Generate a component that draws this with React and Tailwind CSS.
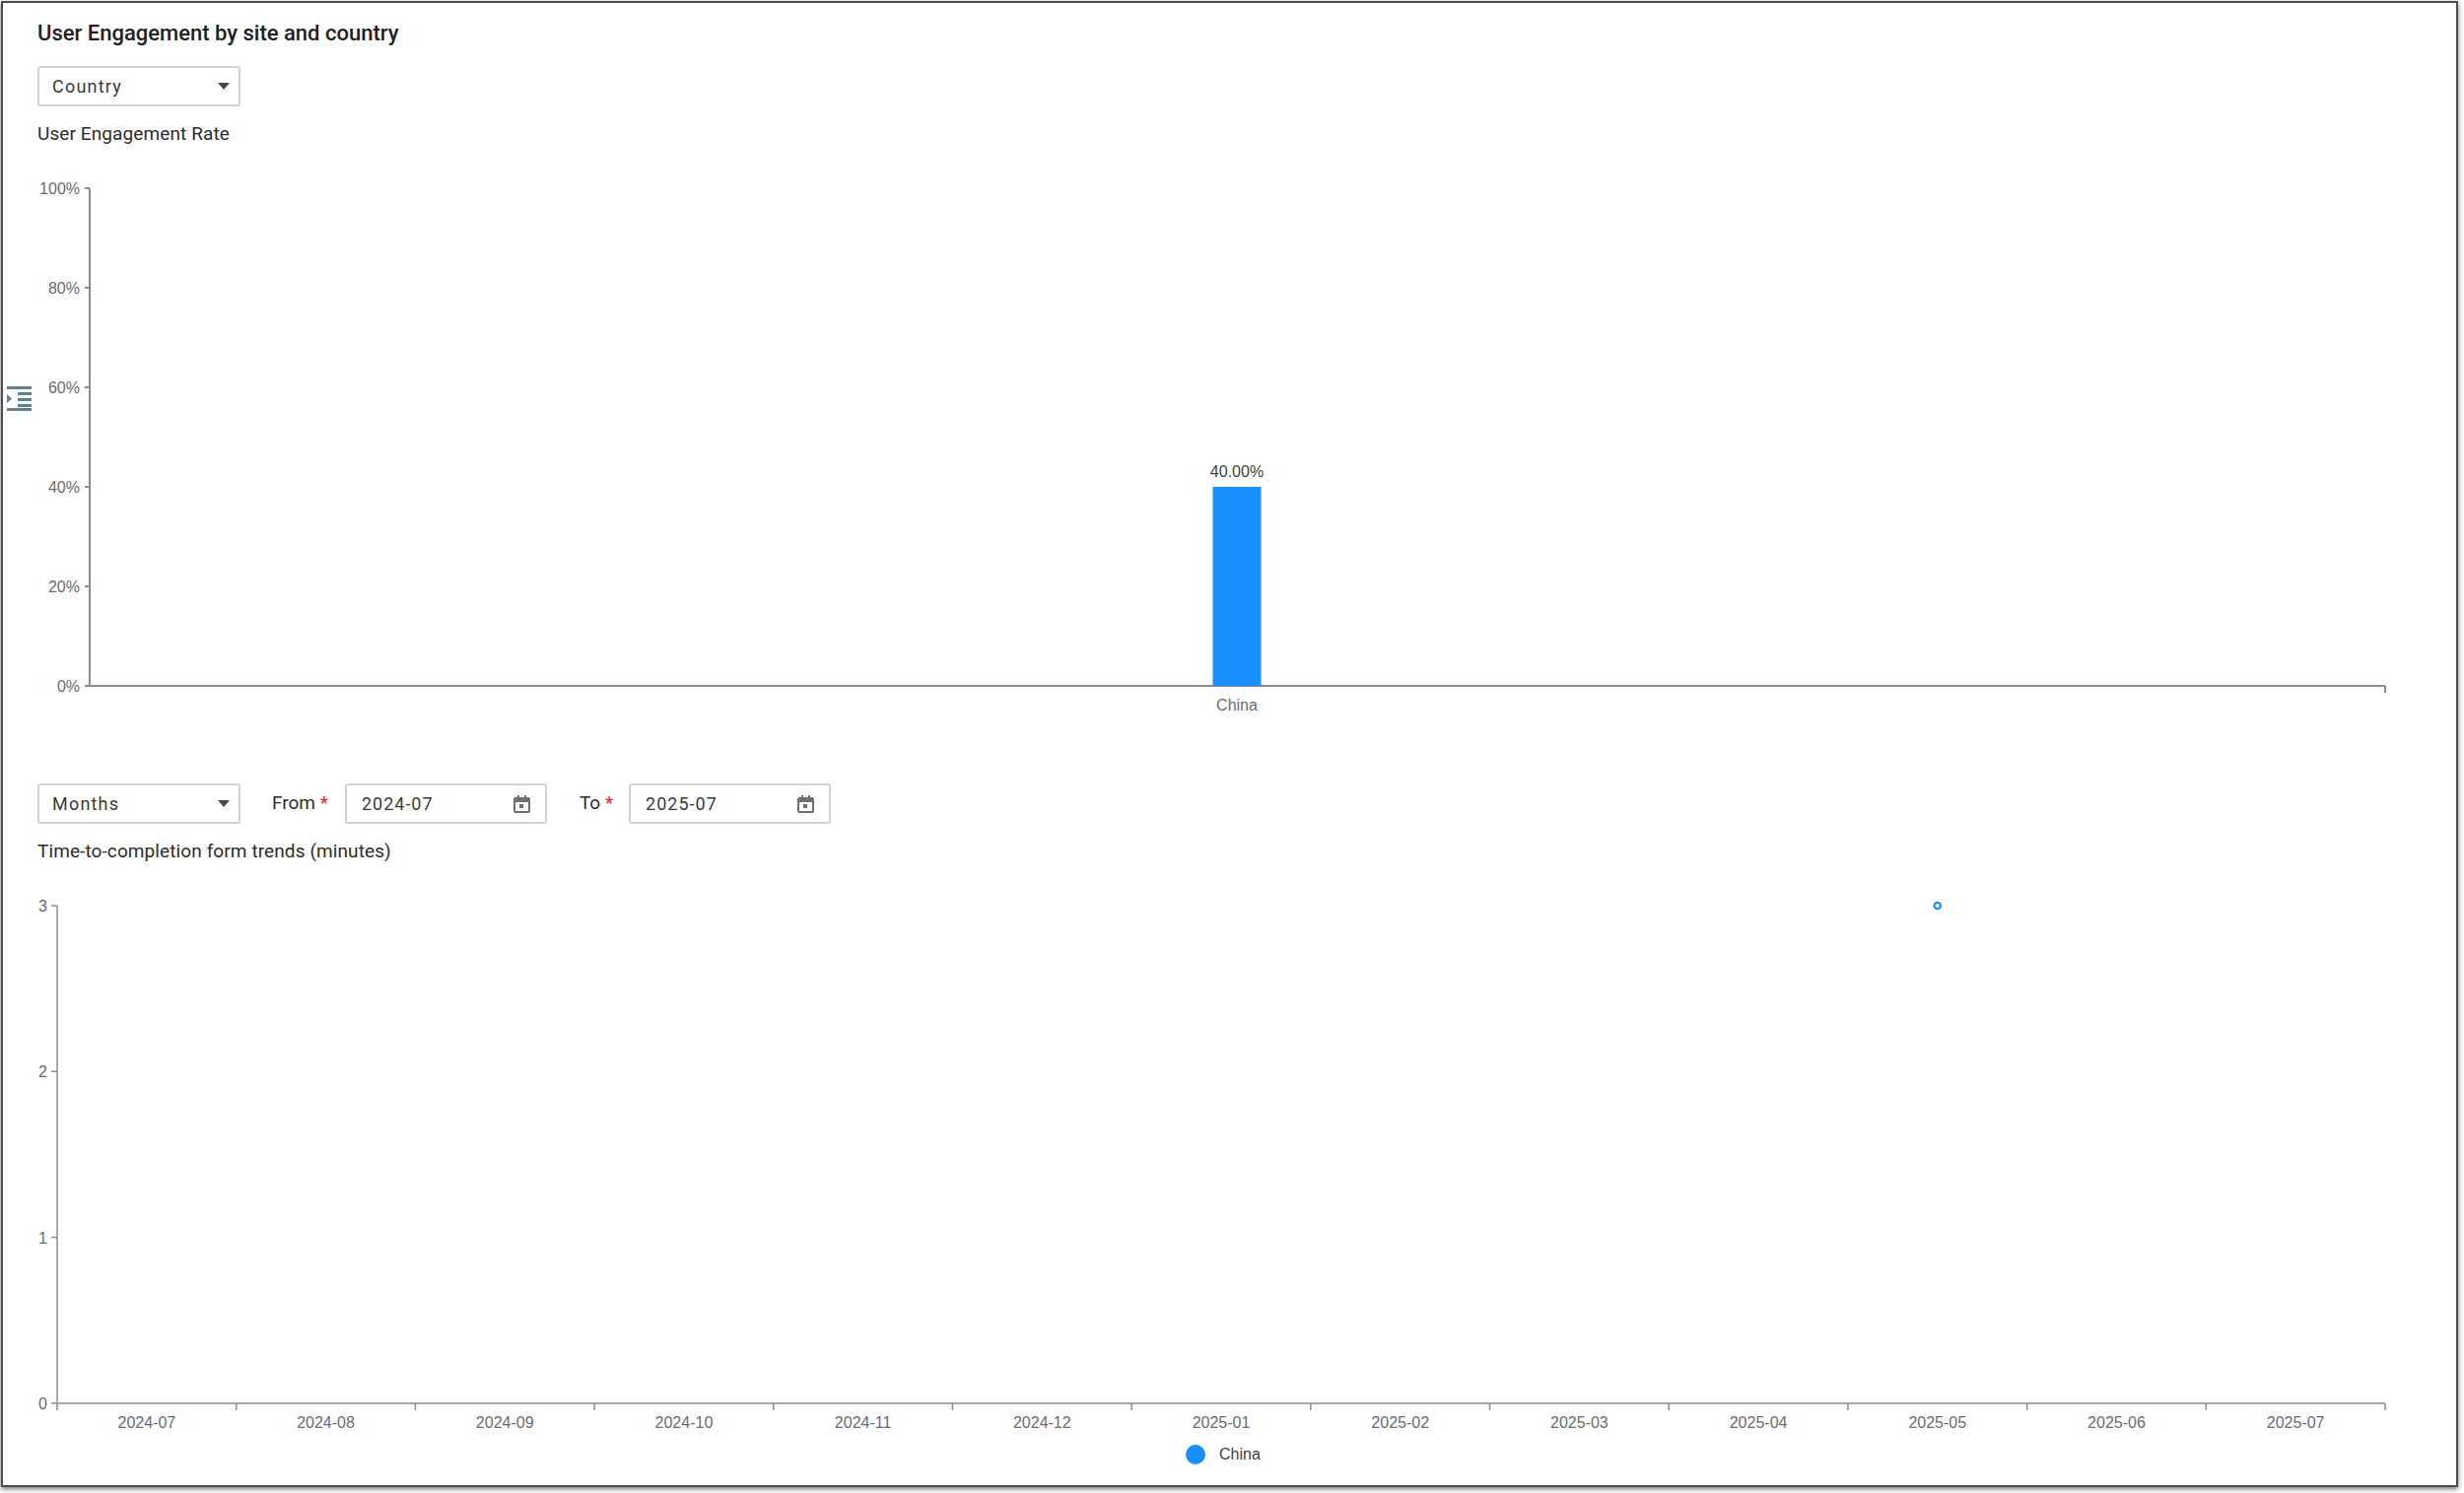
const yLabels = ["100%", "80%", "60%", "40%", "20%", "0%"];
const months = [
  "2024-07", "2024-08", "2024-09", "2024-10", "2024-11", "2024-12", "2025-01",
  "2025-02", "2025-03", "2025-04", "2025-05", "2025-06", "2025-07",
];

const axisColor = "#8b8b94";
const labelColor = "#6a6a74";
const chartFont = "'Liberation Sans', Arial, sans-serif";

function Caret() {
  return (
    <svg width="12" height="7" viewBox="0 0 12 7" className="shrink-0">
      <path d="M0 0h12L6 7z" fill="#45464d" />
    </svg>
  );
}

function CalendarIcon() {
  return (
    <svg width="17" height="18" viewBox="0 0 17 18" className="shrink-0">
      <path
        d="M4 0h2v2h5V0h2v2h2a2 2 0 0 1 2 2v12a2 2 0 0 1-2 2H2a2 2 0 0 1-2-2V4a2 2 0 0 1 2-2h2zM2 7v9h13V7z"
        fill="#6f6f6f"
      />
      <rect x="6" y="9" width="4" height="4" fill="#6f6f6f" />
    </svg>
  );
}

function Select({ value }) {
  return (
    <div className="flex h-[41px] w-[206px] items-center justify-between rounded-[3px] border-2 border-[#d2d2d2] pl-[13px] pr-[9px] text-[18px] tracking-[1.2px] text-[#3a3a3a]">
      {value}
      <Caret />
    </div>
  );
}

function DateInput({ value }) {
  return (
    <div className="flex h-[41px] w-[205px] items-center justify-between rounded-[3px] border-2 border-[#d2d2d2] pl-[15px] pr-[15px] text-[18px] tracking-[1px] text-[#3a3a3a]">
      {value}
      <CalendarIcon />
    </div>
  );
}

function Required({ label }) {
  return (
    <span className="text-[19px] text-[#2c2c2c]">
      {label} <span className="text-[#e0262b]">*</span>
    </span>
  );
}

function RateChart() {
  const top = 41;
  const step = 101;
  const bottom = top + step * 5;
  return (
    <svg width="2488" height="590" className="block" style={{ fontFamily: chartFont }}>
      <line x1="88" y1={top} x2="88" y2={bottom} stroke={axisColor} strokeWidth="2" />
      <line x1="88" y1={bottom} x2="2417" y2={bottom} stroke={axisColor} strokeWidth="2" />
      <line x1="2417" y1={bottom} x2="2417" y2={bottom + 7} stroke={axisColor} strokeWidth="2" />
      {yLabels.map((t, i) => (
        <g key={t}>
          <line x1="83" y1={top + i * step} x2="88" y2={top + i * step} stroke={axisColor} strokeWidth="2" />
          <text x="78" y={top + i * step + 6} textAnchor="end" fontSize="16" fill={labelColor}>
            {t}
          </text>
        </g>
      ))}
      <rect x="1227.5" y={top + step * 3} width="49" height={step * 2} fill="#1890ff" />
      <text x="1252" y={top + step * 3 - 10} textAnchor="middle" fontSize="16" fill="#3d3d3d">
        40.00%
      </text>
      <text x="1252" y={bottom + 25} textAnchor="middle" fontSize="16" fill={labelColor}>
        China
      </text>
    </svg>
  );
}

function TrendChart() {
  const left = 55;
  const right = 2417;
  const top = 41;
  const rowH = 168.3;
  const bottom = top + rowH * 3;
  const colW = (right - left) / months.length;
  return (
    <svg width="2488" height="578" className="block" style={{ fontFamily: chartFont }}>
      <line x1={left} y1={top} x2={left} y2={bottom} stroke={axisColor} strokeWidth="1.5" />
      <line x1={left} y1={bottom} x2={right} y2={bottom} stroke={axisColor} strokeWidth="1.5" />
      {[3, 2, 1, 0].map((t, i) => (
        <g key={t}>
          <line x1={left - 6} y1={top + i * rowH} x2={left} y2={top + i * rowH} stroke={axisColor} strokeWidth="1.5" />
          <text x={left - 10} y={top + i * rowH + 6} textAnchor="end" fontSize="16" fill={labelColor}>
            {t}
          </text>
        </g>
      ))}
      {months.map((m, i) => (
        <text key={m} x={left + colW * (i + 0.5)} y={bottom + 25} textAnchor="middle" fontSize="16" fill={labelColor}>
          {m}
        </text>
      ))}
      {[...months, ""].map((_, i) => (
        <line
          key={i}
          x1={left + colW * i}
          y1={bottom}
          x2={left + colW * i}
          y2={bottom + 7}
          stroke={axisColor}
          strokeWidth="1.5"
        />
      ))}
      <circle cx={left + colW * 10.5} cy={top} r="3.2" fill="#fff" stroke="#1890ff" strokeWidth="2.2" />
    </svg>
  );
}

export default function App() {
  return (
    <div className="h-[1515px] w-[2500px] overflow-hidden bg-white pl-px pt-px font-['Roboto',sans-serif]">
      <div className="relative h-[1508px] w-[2493px] border-2 border-[#4c4c4c] bg-white shadow-[0_2px_5px_rgba(0,0,0,0.55)]">
        {/* sidebar toggle */}
        <svg width="25" height="25" viewBox="0 0 25 25" className="absolute left-[4px] top-[389px]">
          <path d="M0 0h25v3H0zM0 22h25v3H0zM11 6h14v3H11zM11 12h14v3H11zM11 18h14v3H11zM0 8l5 4.5L0 17z" fill="#5f8196" />
        </svg>

        <div className="px-[35px] pt-[17px]">
          <h1 className="h-[28px] text-[22px] leading-[28px] font-medium text-[#212121]">
            User Engagement by site and country
          </h1>
          <div className="mt-[19px]">
            <Select value="Country" />
          </div>
          <div className="mt-[14px] text-[19px] leading-[28px] tracking-[0.1px] text-[#2c2c2c]">User Engagement Rate</div>
        </div>

        <RateChart />

        <div className="mt-[55px] flex items-center px-[35px]">
          <Select value="Months" />
          <div className="ml-[32px] mr-[17px]">
            <Required label="From" />
          </div>
          <DateInput value="2024-07" />
          <div className="ml-[33px] mr-[16px]">
            <Required label="To" />
          </div>
          <DateInput value="2025-07" />
        </div>
        <div className="mt-[14px] px-[35px] text-[19px] leading-[28px] tracking-[0.1px] text-[#2c2c2c]">
          Time-to-completion form trends (minutes)
        </div>

        <TrendChart />

        <div className="mt-[8px] flex items-center pl-[1200px]">
          <span className="h-[20px] w-[20px] rounded-full bg-[#1890ff]" />
          <span className="ml-[14px] font-['Liberation_Sans',sans-serif] text-[16px] text-[#3d3d3d]">China</span>
        </div>
      </div>
    </div>
  );
}
